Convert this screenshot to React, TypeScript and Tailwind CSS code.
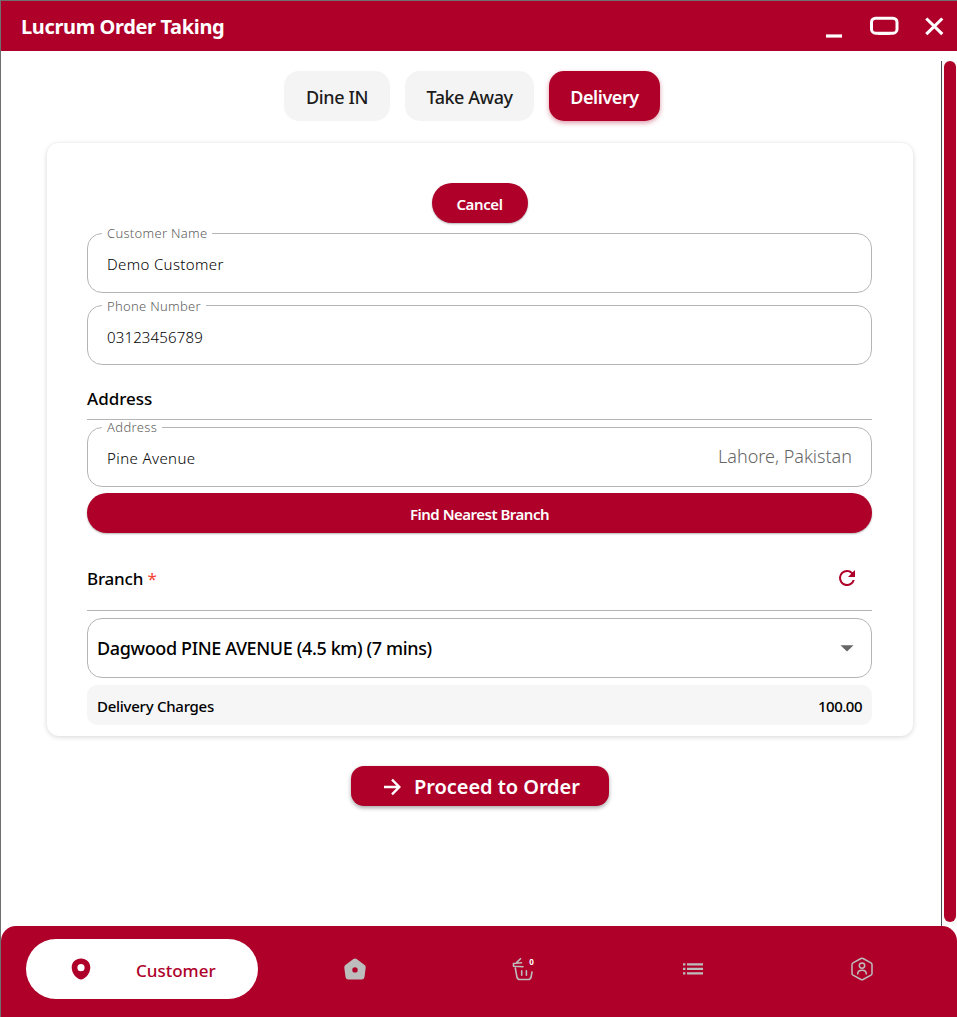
import type { ReactNode } from 'react';

function Tab({ label, className }: { label: string; className: string }) {
  return (
    <button className={`flex h-[50px] items-center justify-center rounded-[15px] pt-[1px] text-[18px] leading-none ${className}`}>
      {label}
    </button>
  );
}

function Field({ label, labelClass, value, valueClass, className, children }: { label: string; labelClass: string; value: string; valueClass: string; className: string; children?: ReactNode }) {
  return (
    <fieldset className={`h-[60px] min-w-0 rounded-[15px] border border-[#b5b5b5] pl-[14px] ${className}`}>
      <legend className={`h-px px-[5px] text-[13px] font-light text-[#606060] ${labelClass}`}>{label}</legend>
      <div className="flex h-[58px] items-center justify-between pt-[2px] pr-[19px] pl-[5px]">
        <span className={`text-[15px] leading-none font-[340] text-black ${valueClass}`}>{value}</span>
        {children}
      </div>
    </fieldset>
  );
}

function TitleBar() {
  return (
    <header className="flex h-[50px] shrink-0 items-center justify-between bg-[#ae0029] pl-[20px] text-white">
      <h1 className="pt-[1px] text-[20px] leading-none font-bold tracking-[-0.36px]">Lucrum Order Taking</h1>
      <svg width="134" height="50" viewBox="823 1 134 50" fill="none" stroke="#fff" className="shrink-0">
        <path d="M826 36H842" strokeWidth="3.2" />
        <rect x="871.5" y="18.2" width="25.5" height="15" rx="4" strokeWidth="3" />
        <path d="M878 34.2H890" strokeWidth="1.6" />
        <path d="M926.3 18.5L942.3 34.2M942.3 18.5L926.3 34.2" strokeWidth="3.1" />
      </svg>
    </header>
  );
}

function OrderCard() {
  return (
    <section className="mt-[22px] ml-[46px] flex h-[593px] w-[866px] flex-col rounded-[12px] bg-white pr-[41px] pl-[40px] shadow-[0_1px_5px_rgba(0,0,0,0.17)]">
      <button className="mt-[40px] flex h-[40px] w-[96px] items-center justify-center self-center rounded-full bg-[#ae0029] pt-[3px] text-[15px] leading-none font-semibold tracking-[-0.4px] text-white shadow-[0_1px_2px_rgba(0,0,0,0.3)]">
        Cancel
      </button>
      <Field label="Customer Name" labelClass="leading-px tracking-[0.3px]" value="Demo Customer" valueClass="tracking-[0.36px]" className="mt-[10px]" />
      <Field label="Phone Number" labelClass="leading-[3px] tracking-[0.3px]" value="03123456789" valueClass="pt-[2px] tracking-[0.15px]" className="mt-[12px]" />
      <div className="mt-[20px] flex h-[35px] items-center border-b border-[#b5b5b5] pb-[8px]">
        <h2 className="text-[17px] leading-none font-medium text-black">Address</h2>
      </div>
      <Field label="Address" labelClass="leading-px tracking-[0.35px]" value="Pine Avenue" valueClass="tracking-[0.4px]" className="mt-[7px]">
        <span className="-mt-[4px] text-[18px] leading-none font-light text-[#666666]">Lahore, Pakistan</span>
      </Field>
      <button className="mt-[6px] flex h-[40px] shrink-0 items-center justify-center rounded-full bg-[#ae0029] pt-[3px] text-[15px] leading-none font-semibold tracking-[-0.5px] text-white shadow-[0_1px_2px_rgba(0,0,0,0.3)]">
        Find Nearest Branch
      </button>
      <div className="mt-[12px] flex h-[66px] items-center justify-between border-b border-[#b5b5b5] pr-[13px]">
        <h2 className="pt-[1px] text-[17px] leading-none font-medium tracking-[-0.2px] text-black">
          Branch <span className="font-normal text-[#f44336]">*</span>
        </h2>
        <svg width="24" height="24" viewBox="0 0 24 24" fill="#ae0029">
          <path d="M17.65 6.35A7.96 7.96 0 0 0 12 4a8 8 0 1 0 7.73 10h-2.08A6 6 0 1 1 12 6c1.66 0 3.14.69 4.22 1.78L13 11h7V4z" />
        </svg>
      </div>
      <button className="mt-[7px] flex h-[60px] shrink-0 items-center justify-between rounded-[15px] border border-[#b5b5b5] pr-[12px] pl-[9px] text-black">
        <span className="pb-[1px] text-[18px] leading-none font-medium tracking-[-0.37px]">Dagwood PINE AVENUE (4.5 km) (7 mins)</span>
        <svg width="24" height="24" viewBox="0 0 24 24" fill="#666">
          <path d="M5.5 9.2H18.5L12 15.5z" />
        </svg>
      </button>
      <div className="mt-[7px] flex h-[40px] shrink-0 items-center justify-between rounded-[10px] bg-[#f6f6f6] px-[10px] pt-[3px] text-[15px] leading-none font-medium text-black">
        <span className="tracking-[-0.27px]">Delivery Charges</span>
        <span className="tracking-[-0.5px]">100.00</span>
      </div>
    </section>
  );
}

function BottomNav() {
  return (
    <nav className="flex h-[91px] shrink-0 rounded-t-[15px] bg-[#ae0029] pt-[13px] pr-[10px] pl-[25px]">
      <button className="mr-[12px] flex h-[60px] w-[232px] shrink-0 items-center rounded-full bg-white pl-[44px] text-[#ae0029]">
        <svg width="22" height="24" viewBox="0 0 22 24" fill="currentColor" fillRule="evenodd">
          <path d="M11 1.500C5.700 1.500 1.700 5.300 1.700 10.300C1.700 15.300 4.600 19.700 8.500 21.800C10 22.700 12 22.700 13.500 21.800C17.400 19.700 20.300 15.300 20.300 10.300C20.300 5.300 16.300 1.500 11 1.500ZM11 7.100A3.600 3.600 0 1 1 11 14.300A3.600 3.600 0 1 1 11 7.100Z" />
        </svg>
        <span className="ml-[44px] pt-[3px] text-[17px] leading-none font-medium">Customer</span>
      </button>
      <button className="flex h-[60px] flex-1 items-center justify-center">
        <svg width="24" height="24" viewBox="0 0 24 24" fill="#bdbdbd" fillRule="evenodd">
          <path d="M10.400 1.900Q12 1 13.600 1.900L21.300 7.800Q23 9 22.700 10.800L21.500 20Q21.100 22.500 18.500 22.500H5.500Q2.900 22.500 2.500 20L1.300 10.800Q1 9 2.700 7.800ZM12 10.200A2.700 2.700 0 1 0 12 15.600A2.700 2.700 0 1 0 12 10.200Z" />
        </svg>
      </button>
      <button className="relative flex h-[60px] flex-1 items-center justify-center">
        <svg width="24" height="26" viewBox="512 956 24 26" fill="none" stroke="#bdbdbd" strokeWidth="1.6" strokeLinecap="round" strokeLinejoin="round">
          <path d="M520.500 958.700L516.500 962.600M513.500 963.500L521.500 962.800M513.500 963.500V966.200L523 966.800M515.300 968L517 977.300Q517.500 979.500 519.800 979.500H528.200Q530.500 979.500 531 977.300L532 972M521.700 970.700V975.200M526.400 970.700V975.200" />
        </svg>
        <span className="absolute top-[19px] left-[90px] text-[8px] leading-none font-bold text-white">0</span>
      </button>
      <button className="flex h-[60px] flex-1 items-center justify-center">
        <svg width="20" height="12" viewBox="0 0 20 12" fill="#bdbdbd">
          <path d="M0 .3H2.400V2.500H0ZM4 .3H20V2.500H4ZM0 4.800H2.400V7H0ZM4 4.800H20V7H4ZM0 9.300H2.400V11.500H0ZM4 9.300H20V11.500H4Z" />
        </svg>
      </button>
      <button className="flex h-[60px] flex-1 items-center justify-center">
        <svg width="24" height="24" viewBox="0 0 24 24" fill="none" stroke="#bdbdbd" strokeWidth="1.5" strokeLinecap="round" strokeLinejoin="round">
          <path d="M11 1.500Q12 1 13 1.500L21 5.900Q22 6.500 22 7.600V16.400Q22 17.500 21 18.100L13 22.500Q12 23 11 22.500L3 18.100Q2 17.500 2 16.400V7.600Q2 6.500 3 5.900Z" />
          <circle cx="12" cy="8.600" r="2.700" />
          <path d="M7.700 17C7.700 14.500 9.600 13.300 12 13.300S16.300 14.500 16.300 17" />
        </svg>
      </button>
    </nav>
  );
}

export default function App() {
  return (
    <div className="flex h-[1017px] w-[957px] flex-col overflow-hidden border-t border-l border-[#6f6f6f] bg-white font-['Noto_Sans',sans-serif]">
      <TitleBar />
      <div className="flex min-h-0 flex-1">
        <main className="flex w-[940px] shrink-0 flex-col pt-[20px]">
          <div className="flex gap-[15px] pl-[283px]">
            <Tab label="Dine IN" className="w-[106px] bg-[#f4f4f4] font-medium tracking-[-0.35px] text-[#1c1c1c]" />
            <Tab label="Take Away" className="w-[129px] bg-[#f4f4f4] font-medium tracking-[-0.45px] text-[#1c1c1c]" />
            <Tab label="Delivery" className="w-[111px] bg-[#ae0029] font-semibold tracking-[-0.45px] text-white shadow-[0_2px_5px_rgba(173,0,41,0.4)]" />
          </div>
          <OrderCard />
          <button className="mt-[30px] ml-[350px] flex h-[40px] w-[258px] items-center rounded-[13px] bg-[#ae0029] pl-[29px] text-white shadow-[0_2px_4px_rgba(0,0,0,0.35)]">
            <svg width="24" height="24" viewBox="0 0 24 24" fill="none" stroke="currentColor" strokeWidth="2.4" className="mt-[1px]">
              <path d="M4 12H19M12 4.700L19.300 12L12 19.300" />
            </svg>
            <span className="ml-[10px] pt-[1px] text-[20px] leading-none font-semibold tracking-[-0.05px]">Proceed to Order</span>
          </button>
        </main>
        <div className="mt-[10px] w-[16px] border-l border-[#4a4a58] bg-[#fafafa] pl-[2px]">
          <div className="h-[861px] w-[12px] rounded-full bg-[#ae0029]" />
        </div>
      </div>
      <BottomNav />
    </div>
  );
}
